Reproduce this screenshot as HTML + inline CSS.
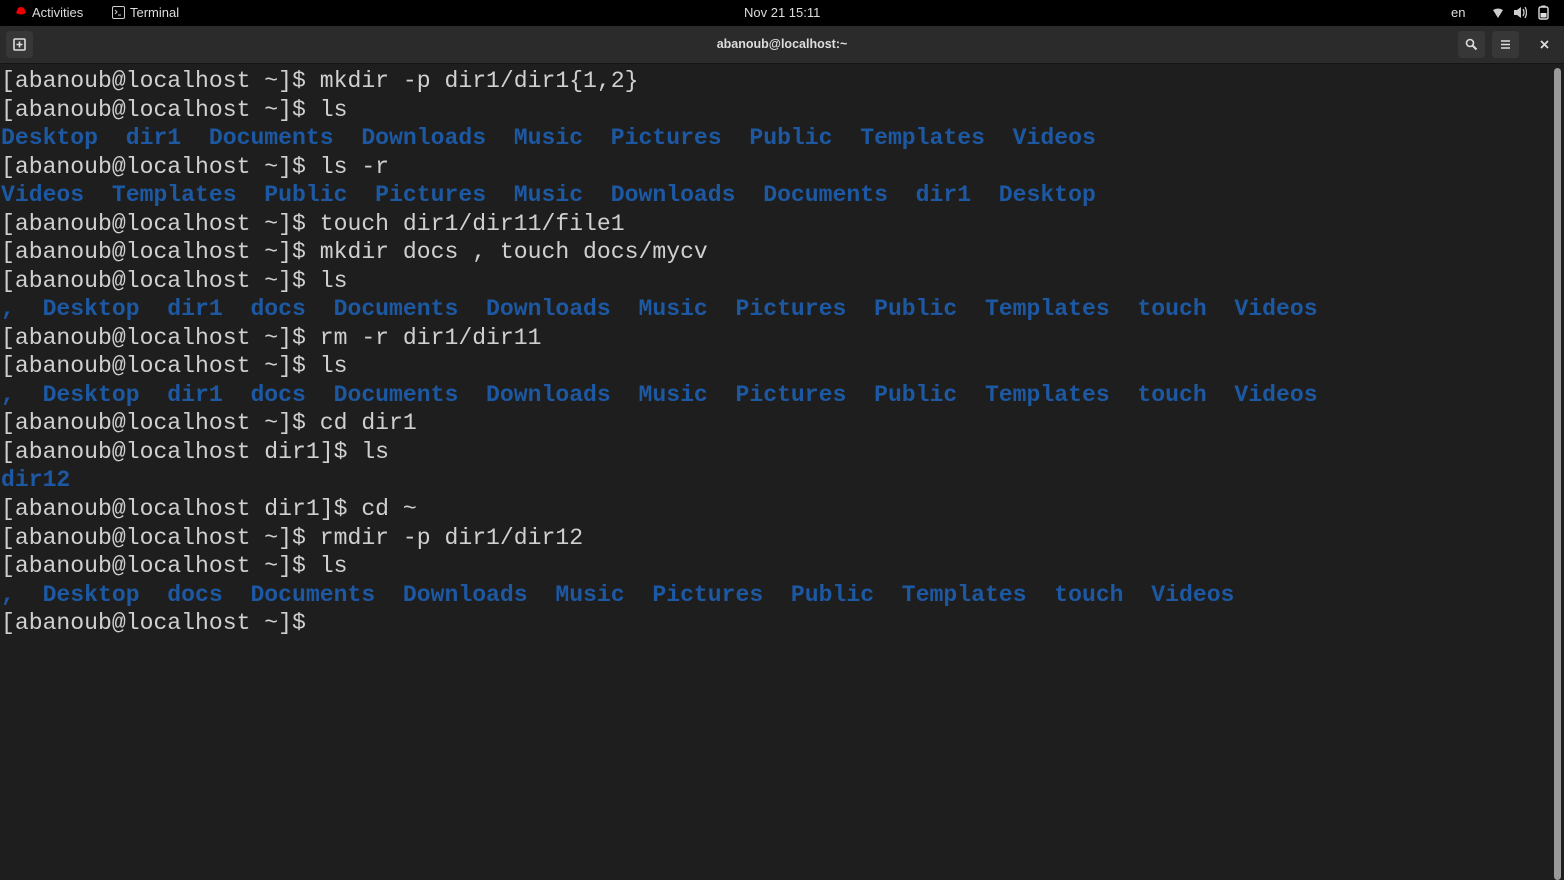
<!DOCTYPE html>
<html><head><meta charset="utf-8"><style>
html,body{margin:0;padding:0;width:1564px;height:880px;overflow:hidden;background:#1e1e1e;}
#top{position:absolute;left:0;top:0;width:1564px;height:26px;background:#000;color:#ddd;font:13px "Liberation Sans",sans-serif;}
#top span{position:absolute;top:5px;}
#hdr{position:absolute;left:0;top:26px;width:1564px;height:37px;background:#2b2b2b;border-bottom:1px solid #151515;color:#ddd;font:bold 12.5px "Liberation Sans",sans-serif;}
.btn{position:absolute;top:5px;width:27px;height:27px;background:#373737;border-radius:4px;}
#term{position:absolute;left:1px;top:67px;font:23.1px/28.53px "Liberation Mono",monospace;color:#d0d0d0;white-space:pre;}
.b{color:#1d58a3;font-weight:bold;}
#sb{position:absolute;left:1554px;top:68px;width:7px;height:812px;background:#9a9a9a;border-radius:4px;}
</style></head><body>
<div id="top">
<svg style="position:absolute;left:14px;top:6px" width="14" height="12" viewBox="0 0 14 12"><path d="M2 7 L4 2 Q7 0 10 2 L12 7 Q7 10 2 7Z" fill="#e00"/></svg>
<span style="left:32px">Activities</span>
<svg style="position:absolute;left:112px;top:6px" width="13" height="13" viewBox="0 0 13 13"><rect x="0.5" y="0.5" width="12" height="12" rx="1.5" fill="none" stroke="#ccc"/><path d="M3 4l2 2-2 2M6 9h3" stroke="#ccc" fill="none"/></svg>
<span style="left:130px">Terminal</span>
<span style="left:744px">Nov 21  15:11</span>
<span style="left:1451px">en</span>
<svg style="position:absolute;left:1492px;top:7px" width="12" height="12" viewBox="0 0 12 12"><path d="M1 3Q6 0 11 3L6 11Z" fill="#ccc"/></svg>
<svg style="position:absolute;left:1513px;top:6px" width="14" height="13" viewBox="0 0 14 13"><path d="M1 4h3l4-3v11l-4-3H1Z" fill="#ccc"/><path d="M10 3q2 3.5 0 7M12 1q3 5.5 0 11" stroke="#ccc" fill="none" stroke-width="1.3"/></svg>
<svg style="position:absolute;left:1538px;top:5px" width="11" height="15" viewBox="0 0 11 15"><rect x="1" y="2" width="9" height="12" rx="1.5" fill="none" stroke="#ddd" stroke-width="1.4"/><rect x="3.5" y="0.5" width="4" height="2" fill="#ddd"/><rect x="2.5" y="8" width="6" height="4.5" fill="#ddd"/></svg>
</div>
<div id="hdr">
<div class="btn" style="left:6px"><svg style="position:absolute;left:7px;top:7px" width="13" height="13" viewBox="0 0 13 13"><rect x="1" y="1" width="11" height="11" rx="1" fill="none" stroke="#ddd" stroke-width="1.6"/><path d="M6.5 3.5v6M3.5 6.5h6" stroke="#ddd" stroke-width="1.6"/></svg></div>
<div style="position:absolute;left:0;width:1564px;top:11px;text-align:center">abanoub@localhost:~</div>
<div class="btn" style="left:1458px"><svg style="position:absolute;left:7px;top:7px" width="13" height="13" viewBox="0 0 13 13"><circle cx="5" cy="5" r="3.5" fill="none" stroke="#ddd" stroke-width="1.6"/><path d="M7.5 7.5l4 4" stroke="#ddd" stroke-width="2"/></svg></div>
<div class="btn" style="left:1492px"><svg style="position:absolute;left:8px;top:8px" width="11" height="11" viewBox="0 0 11 11"><path d="M1 2h9M1 5.5h9M1 9h9" stroke="#ddd" stroke-width="1.6"/></svg></div>
<svg style="position:absolute;left:1540px;top:14px" width="9" height="9" viewBox="0 0 9 9"><path d="M1 1l7 7M8 1l-7 7" stroke="#ddd" stroke-width="1.8"/></svg>
</div>
<div id="term">[abanoub@localhost ~]$ mkdir -p dir1/dir1{1,2}
[abanoub@localhost ~]$ ls
<span class="b">Desktop  dir1  Documents  Downloads  Music  Pictures  Public  Templates  Videos</span>
[abanoub@localhost ~]$ ls -r
<span class="b">Videos  Templates  Public  Pictures  Music  Downloads  Documents  dir1  Desktop</span>
[abanoub@localhost ~]$ touch dir1/dir11/file1
[abanoub@localhost ~]$ mkdir docs , touch docs/mycv
[abanoub@localhost ~]$ ls
<span class="b">,  Desktop  dir1  docs  Documents  Downloads  Music  Pictures  Public  Templates  touch  Videos</span>
[abanoub@localhost ~]$ rm -r dir1/dir11
[abanoub@localhost ~]$ ls
<span class="b">,  Desktop  dir1  docs  Documents  Downloads  Music  Pictures  Public  Templates  touch  Videos</span>
[abanoub@localhost ~]$ cd dir1
[abanoub@localhost dir1]$ ls
<span class="b">dir12</span>
[abanoub@localhost dir1]$ cd ~
[abanoub@localhost ~]$ rmdir -p dir1/dir12
[abanoub@localhost ~]$ ls
<span class="b">,  Desktop  docs  Documents  Downloads  Music  Pictures  Public  Templates  touch  Videos</span>
[abanoub@localhost ~]$ </div>
<div id="sb"></div>
</body></html>
